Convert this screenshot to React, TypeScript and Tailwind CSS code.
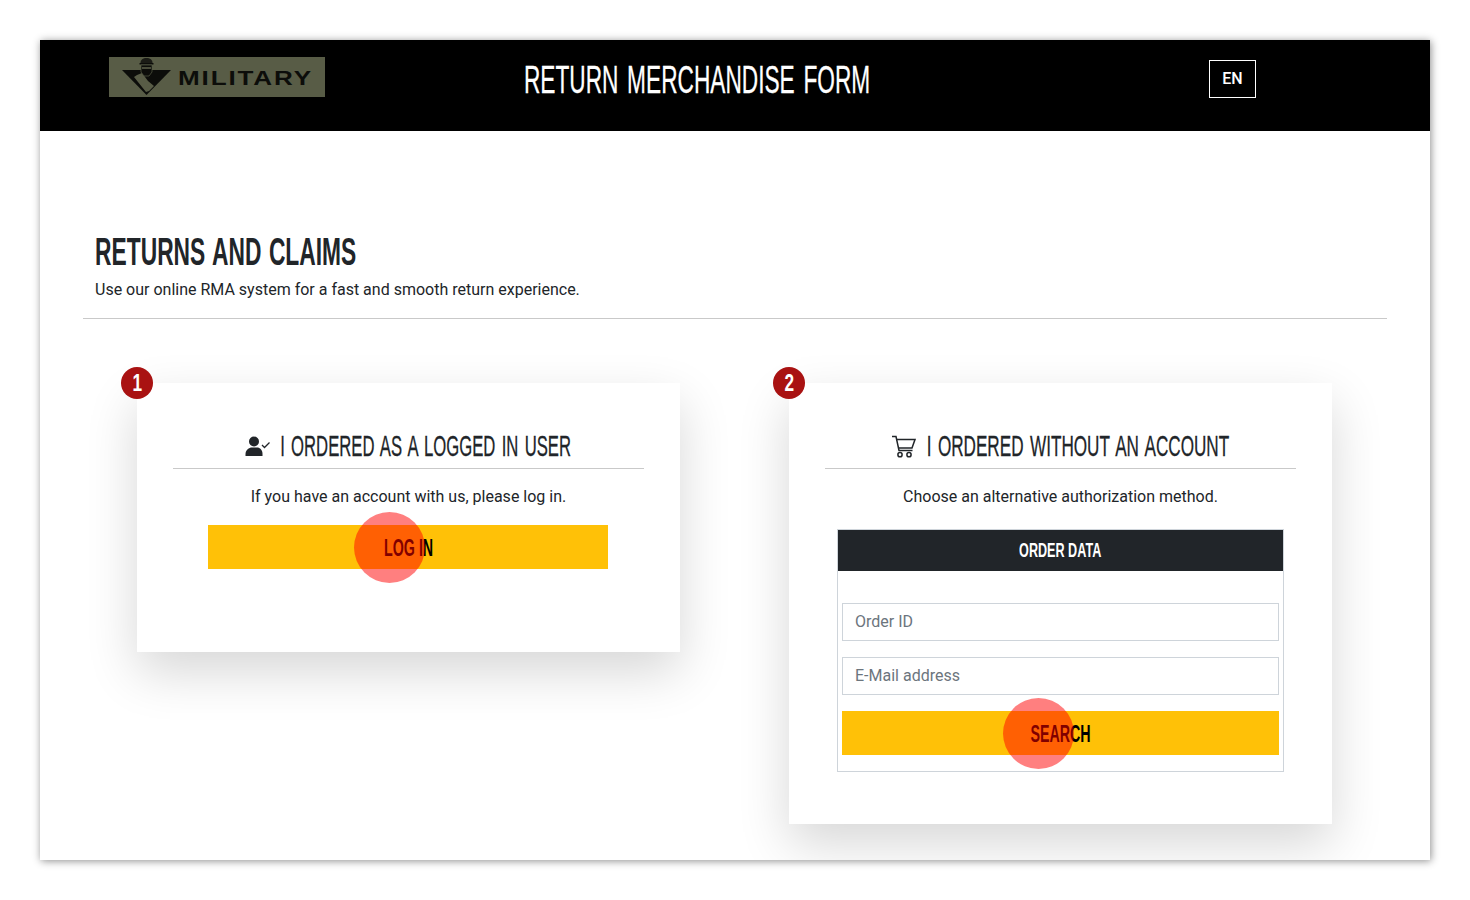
import React from "react";

const narrow = "font-['Liberation_Sans',sans-serif]";

// no Oswald here, so squeeze Liberation Sans into a box of the wanted width
function Squeezed({ box, squeeze, children }: { box: string; squeeze: string; children: React.ReactNode }) {
  return (
    <span className={`inline-flex shrink-0 justify-center whitespace-nowrap ${box}`}>
      <span className={`inline-block shrink-0 ${squeeze}`}>{children}</span>
    </span>
  );
}

function Logo() {
  return (
    <div className="flex h-10 w-[216px] items-center bg-[#585c46] pl-[10px]">
      <svg width="56" height="40" viewBox="0 0 56 40" className="shrink-0">
        <path d="M3 13 H52 L27.5 38 Z" fill="#0c0d0a" />
        <path d="M18 18 L23 16 L29 24 L35 29 L30 34 L27 35 L15 20 Z" fill="#585c46" />
        <path d="M21.5 6 C21.5 2.5 24 1 27.5 1 C31 1 33.5 2.5 33.5 6 Z" fill="#1b1c16" />
        <path d="M20.5 6 H34.5 V7.5 H20.5 Z" fill="#0c0d0a" />
        <path d="M22 8 H33 L33 15 L30 19 H25 L22 15 Z" fill="#0c0d0a" stroke="#585c46" strokeWidth="0.7" />
        <rect x="23" y="10" width="9" height="2" fill="#4a4d3b" />
      </svg>
      <span className={`ml-[3px] origin-left scale-x-[1.24] text-[21px] leading-none font-bold tracking-[1.5px] text-[#0c0d0a] ${narrow}`}>
        MILITARY
      </span>
    </div>
  );
}

function UserIcon() {
  return (
    <svg width="26" height="20" viewBox="0 0 26 20" className="mr-[9px] mt-[2px] shrink-0">
      <circle cx="9" cy="5.5" r="5" fill="#212529" />
      <path d="M0.5 20 V18 C0.5 14 4 11.5 7 11.5 H12 C15 11.5 17.5 14 17.5 18 V20 Z" fill="#212529" />
      <path d="M17 9 L19.5 11.5 L24.5 6.5" fill="none" stroke="#212529" strokeWidth="1.3" />
    </svg>
  );
}

function CartIcon() {
  return (
    <svg width="24" height="24" viewBox="0 0 24 24" className="mr-[10px] mt-[3px] shrink-0" fill="none" stroke="#212529" strokeWidth="1.5">
      <path d="M0 1.5 H4 L7 15.5 H20.5" />
      <path d="M4.5 4.5 H23 L20 13 H6.5" />
      <circle cx="8" cy="19.7" r="2.1" />
      <circle cx="17" cy="19.7" r="2.1" />
    </svg>
  );
}

function Badge({ n }: { n: number }) {
  return (
    <div className={`absolute -left-4 -top-4 flex h-8 w-8 items-center justify-center rounded-full bg-[#a91212] text-[23px] font-bold text-white ${narrow}`}>
      <span className="inline-block scale-x-[0.75]">{n}</span>
    </div>
  );
}

function YellowButton({ label, box, dotClass }: { label: string; box: string; dotClass: string }) {
  return (
    <div className="relative">
      <button className={`flex h-11 w-full items-center justify-center bg-[#ffc107] pt-[2px] text-[23px] font-bold text-black ${narrow}`}>
        <Squeezed box={box} squeeze="scale-x-[0.62]">{label}</Squeezed>
      </button>
      <span className={`absolute top-[-13px] h-[71px] w-[71px] rounded-full bg-[#ff0000]/50 ${dotClass}`} />
    </div>
  );
}

function CardHeading({ icon, box, squeeze, children }: { icon: React.ReactNode; box: string; squeeze: string; children: React.ReactNode }) {
  return (
    <div className="mx-9 flex h-[45px] items-center justify-center border-b border-[#c9c9c9] pb-[2px]">
      {icon}
      <h2 className={`pt-[2px] text-[30px] leading-none text-[#212529] [word-spacing:3px] [-webkit-text-stroke:0.3px_#212529] ${narrow}`}>
        <Squeezed box={box} squeeze={squeeze}>{children}</Squeezed>
      </h2>
    </div>
  );
}

export default function App() {
  return (
    <div className="min-h-[900px] bg-white p-10 font-['Roboto',sans-serif] text-[#212529]">
      <div className="h-[820px] w-[1390px] overflow-hidden bg-white shadow-[1px_1px_8px_rgba(0,0,0,0.45)]">
        <header className="flex h-[91px] bg-black pl-[69px] pt-[17px]">
          <Logo />
          <h1 className={`ml-[199px] mt-[3px] text-[38px] leading-[40px] text-white [word-spacing:4px] [-webkit-text-stroke:0.3px_#fff] ${narrow}`}>
            <Squeezed box="w-[346px]" squeeze="scale-x-[0.597]">RETURN MERCHANDISE FORM</Squeezed>
          </h1>
          <button className="ml-[339px] mt-[3px] h-[38px] w-[47px] border border-white text-base font-medium text-white">
            EN
          </button>
        </header>

        <main className="mx-[43px] pt-[99px]">
          <div className="border-b border-[#c9c9c9] pb-4 pl-3">
            <h1 className={`text-[38px] leading-[44px] font-bold text-[#212529] [word-spacing:2px] ${narrow}`}>
              <Squeezed box="w-[262px]" squeeze="scale-x-[0.6]">RETURNS AND CLAIMS</Squeezed>
            </h1>
            <p className="mt-[4px] text-base leading-6">Use our online RMA system for a fast and smooth return experience.</p>
          </div>

          <div className="mt-16 flex items-start gap-[109px] pl-[54px]">
            <section className="relative h-[269px] w-[543px] bg-white pt-[41px] shadow-[0_20px_48px_rgba(0,0,0,0.16)]">
              <Badge n={1} />
              <CardHeading icon={<UserIcon />} box="w-[292px]" squeeze="scale-x-[0.556]">I ORDERED AS A LOGGED IN USER</CardHeading>
              <p className="mt-[16px] text-center text-base leading-6">If you have an account with us, please log in.</p>
              <div className="ml-[71px] mt-4 w-[400px]">
                <YellowButton label="LOG IN" box="ml-[2px] w-[50px]" dotClass="left-[146px]" />
              </div>
            </section>

            <section className="relative h-[441px] w-[543px] bg-white pt-[41px] shadow-[0_20px_48px_rgba(0,0,0,0.16)]">
              <Badge n={2} />
              <CardHeading icon={<CartIcon />} box="w-[303px]" squeeze="scale-x-[0.571]">I ORDERED WITHOUT AN ACCOUNT</CardHeading>
              <p className="mt-[16px] text-center text-base leading-6">Choose an alternative authorization method.</p>
              <div className="ml-[48px] mt-5 h-[243px] w-[447px] border border-[#ced4da]">
                <div className={`flex h-[41px] items-center justify-center bg-[#212529] pb-[2px] text-[20px] font-bold text-white ${narrow}`}>
                  <Squeezed box="w-[82px]" squeeze="scale-x-[0.63]">ORDER DATA</Squeezed>
                </div>
                <div className="flex flex-col gap-4 px-1 pt-8">
                  <input placeholder="Order ID" className="h-[38px] border border-[#ced4da] px-3 pb-[2px] text-base outline-none placeholder:text-[#6c757d]" />
                  <input placeholder="E-Mail address" className="h-[38px] border border-[#ced4da] px-3 pb-[2px] text-base outline-none placeholder:text-[#6c757d]" />
                  <YellowButton label="SEARCH" box="w-[60px]" dotClass="left-[161px]" />
                </div>
              </div>
            </section>
          </div>
        </main>
      </div>
    </div>
  );
}
